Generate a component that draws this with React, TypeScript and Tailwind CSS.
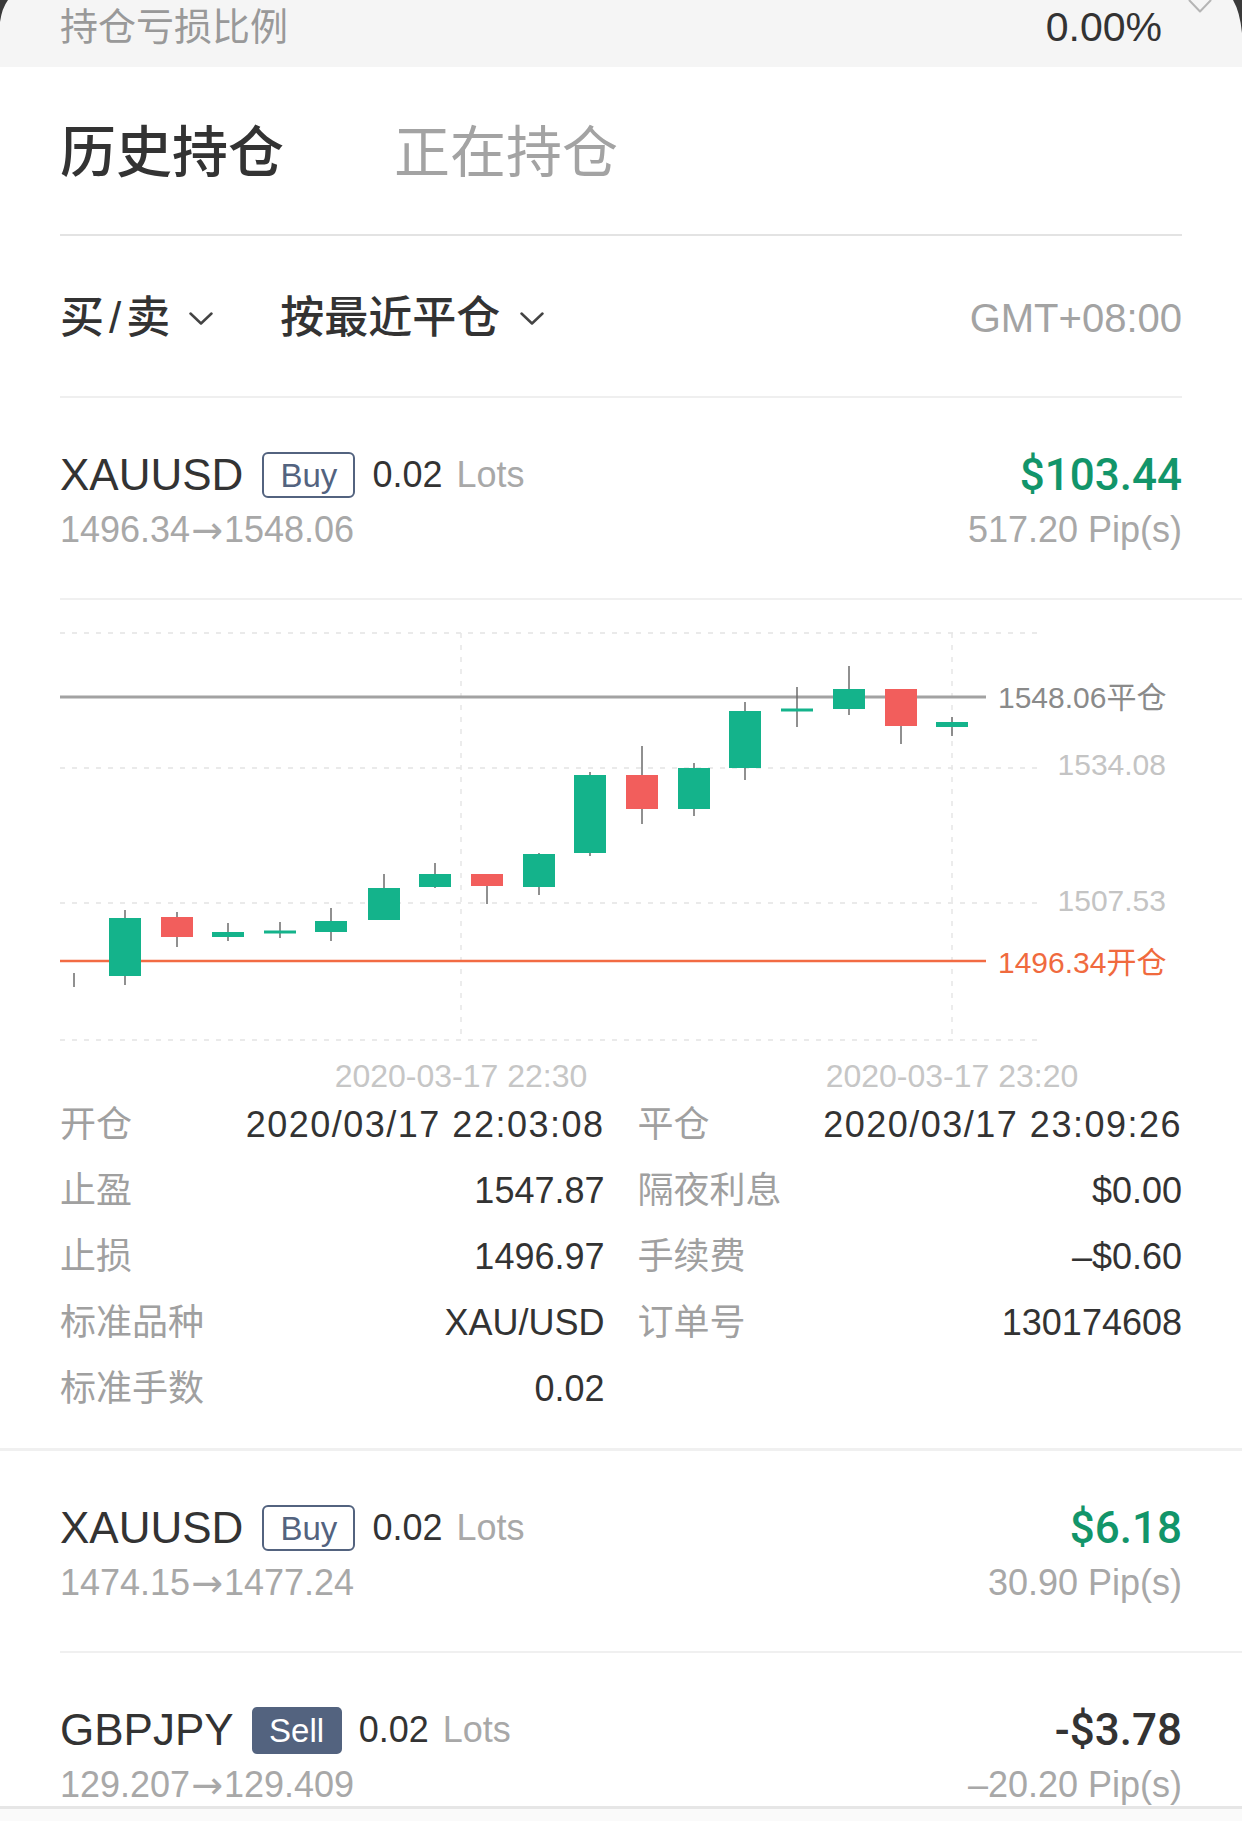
import React from "react";

type Candle = [number, number, number, number, number, "g" | "r" | "n"];

const candles: Candle[] = [
  [74, 0, 0, 973, 987, "n"],
  [125, 918, 976, 910, 985, "g"],
  [177, 917, 937, 912, 947, "r"],
  [228, 932, 937, 923, 941, "g"],
  [280, 932, 932, 922, 938, "g"],
  [331, 921, 932, 908, 941, "g"],
  [384, 888, 920, 874, 920, "g"],
  [435, 874, 887, 863, 888, "g"],
  [487, 874, 886, 874, 904, "r"],
  [539, 854, 887, 853, 895, "g"],
  [590, 775, 853, 772, 856, "g"],
  [642, 775, 809, 746, 824, "r"],
  [694, 768, 809, 763, 816, "g"],
  [745, 711, 768, 702, 780, "g"],
  [797, 710, 710, 687, 727, "g"],
  [849, 689, 709, 666, 715, "g"],
  [901, 689, 726, 689, 744, "r"],
  [952, 722, 727, 717, 736, "g"],
];

const GREEN = "#14b38b";
const RED = "#f25e5c";

function Chevron({ className = "", color = "#444", w = 24, h = 13, sw = 2.5 }: { className?: string; color?: string; w?: number; h?: number; sw?: number }) {
  return (
    <svg width={w} height={h} viewBox={`0 0 ${w} ${h}`} className={className}>
      <path d={`M1.5 1.5 L${w / 2} ${h - 1.5} L${w - 1.5} 1.5`} fill="none" stroke={color} strokeWidth={sw} strokeLinecap="round" strokeLinejoin="round" />
    </svg>
  );
}

function Chart() {
  const font = "'Liberation Sans','Noto Sans CJK SC',sans-serif";
  return (
    <svg width="1242" height="460" viewBox="0 600 1242 460" className="block">
      {[633, 768, 903, 1040].map((y) => (
        <line key={y} x1={60} x2={1038} y1={y} y2={y} stroke="#e3e3e3" strokeWidth={1.5} strokeDasharray="5 7" />
      ))}
      {[461, 952].map((x) => (
        <line key={x} x1={x} x2={x} y1={633} y2={1040} stroke="#e6e6e6" strokeWidth={1.5} strokeDasharray="5 7" />
      ))}
      <line x1={60} x2={986} y1={697} y2={697} stroke="#a2a2a2" strokeWidth={3} />
      <line x1={60} x2={986} y1={961} y2={961} stroke="#f26b43" strokeWidth={2.5} />
      {candles.map(([x, bt, bb, wt, wb, c], i) => {
        const fill = c === "g" ? GREEN : c === "r" ? RED : "#777";
        const h = Math.max(bb - bt, 3);
        const top = bb - bt < 3 ? (bt + bb) / 2 - 1.5 : bt;
        return (
          <g key={i}>
            <line x1={x} x2={x} y1={wt} y2={wb} stroke="#6b6b6b" strokeWidth={1.5} />
            {c !== "n" && <rect x={x - 16} y={top} width={32} height={h} fill={fill} />}
          </g>
        );
      })}
      <text x={998} y={697} dominantBaseline="central" fontSize={30} fill="#8a8a8a" fontFamily={font}>
        1548.06平仓
      </text>
      <text x={1166} y={764} dominantBaseline="central" textAnchor="end" fontSize={30} fill="#c4c4c4" fontFamily={font}>
        1534.08
      </text>
      <text x={1166} y={900} dominantBaseline="central" textAnchor="end" fontSize={30} fill="#c4c4c4" fontFamily={font}>
        1507.53
      </text>
      <text x={998} y={962} dominantBaseline="central" fontSize={30} fill="#f06a3e" fontFamily={font}>
        1496.34开仓
      </text>
    </svg>
  );
}

function Arrow() {
  return <span className="font-['DejaVu_Sans',sans-serif] text-[38px] mx-[1px]">→</span>;
}

function Header({
  symbol,
  side,
  from,
  to,
  profit,
  pips,
  profitClass,
}: {
  symbol: string;
  side: "Buy" | "Sell";
  from: string;
  to: string;
  profit: string;
  pips: string;
  profitClass: string;
}) {
  return (
    <div className="mx-[60px] pt-[49px] pb-[46px]">
      <div className="h-[56px] flex items-center justify-between">
        <div className="flex items-center">
          <span className="text-[44px] leading-none text-[#333]">{symbol}</span>
          {side === "Buy" ? (
            <span className="ml-[19px] w-[93px] h-[46px] border-2 border-[#53637f] rounded-[6px] flex items-center justify-center text-[33px] leading-none text-[#53637f]">
              Buy
            </span>
          ) : (
            <span className="ml-[18px] w-[90px] h-[47px] bg-[#53637f] rounded-[5px] flex items-center justify-center text-[33px] leading-none text-white">
              Sell
            </span>
          )}
          <span className="ml-[17px] text-[36px] leading-none text-[#333]">0.02</span>
          <span className="ml-[14px] text-[36px] leading-none text-[#a8a8a8]">Lots</span>
        </div>
        <span className={`font-['Roboto',sans-serif] font-medium text-[44px] leading-none ${profitClass}`}>{profit}</span>
      </div>
      <div className="mt-[5px] h-[44px] flex items-center justify-between text-[36px] leading-none text-[#a8a8a8]">
        <span className="flex items-center">
          {from}
          <Arrow />
          {to}
        </span>
        <span>{pips}</span>
      </div>
    </div>
  );
}

function DetailCell({ label, value, wide }: { label?: string; value?: string; wide?: boolean }) {
  return (
    <div className="h-[66px] flex items-center justify-between">
      <span className="text-[36px] leading-none text-[#a0a0a0]">{label}</span>
      <span className={`text-[36px] leading-none text-[#333] ${wide ? "tracking-[1.5px]" : ""}`}>{value}</span>
    </div>
  );
}

export default function App() {
  return (
    <div className="relative w-[1242px] h-[1821px] overflow-hidden bg-white text-[#333] font-['Liberation_Sans','Noto_Sans_CJK_SC',sans-serif]">
      {/* top summary bar */}
      <div className="h-[67px] bg-[#f5f5f5] flex items-start pl-[60px] pr-[30px]">
        <div className="h-[54px] flex-1 flex items-center">
          <span className="text-[38px] leading-none text-[#999]">持仓亏损比例</span>
        </div>
        <div className="h-[54px] flex items-center">
          <span className="text-[41px] leading-none text-[#333]">0.00%</span>
        </div>
        <Chevron className="ml-[26px] -mt-[1px]" color="#b5b5b5" w={24} h={14} sw={2} />
      </div>

      {/* tabs */}
      <div className="mx-[60px] h-[169px] pt-[5px] flex items-center gap-[110px] border-b-2 border-[#e3e3e3]">
        <span className="text-[56px] leading-none font-medium text-[#333]">历史持仓</span>
        <span className="text-[56px] leading-none text-[#a3a3a3]">正在持仓</span>
      </div>

      {/* filters */}
      <div className="mx-[60px] h-[162px] pt-[4px] flex items-center border-b-2 border-[#efefef]">
        <span className="text-[44px] leading-none font-medium text-[#333]">
          买<span className="mx-[5px]">/</span>卖
        </span>
        <Chevron className="ml-[19px]" />
        <span className="ml-[67px] text-[44px] leading-none font-medium text-[#333]">按最近平仓</span>
        <Chevron className="ml-[20px]" />
        <span className="ml-auto text-[40px] leading-none text-[#a3a3a3]">GMT+08:00</span>
      </div>

      {/* card 1 */}
      <Header symbol="XAUUSD" side="Buy" from="1496.34" to="1548.06" profit="$103.44" pips="517.20 Pip(s)" profitClass="text-[#12956a]" />
      <div className="ml-[60px] h-[2px] bg-[#f0f0f0]" />
      <Chart />
      <div className="relative h-[32px] text-[32px] leading-none text-[#c6c6c6]">
        <span className="absolute left-[461px] top-0 -translate-x-1/2 whitespace-nowrap">2020-03-17 22:30</span>
        <span className="absolute left-[952px] top-0 -translate-x-1/2 whitespace-nowrap">2020-03-17 23:20</span>
      </div>
      <div className="mx-[60px] grid grid-cols-2 gap-x-[33px] pb-[26px]">
        <DetailCell label="开仓" value="2020/03/17 22:03:08" wide />
        <DetailCell label="平仓" value="2020/03/17 23:09:26" wide />
        <DetailCell label="止盈" value="1547.87" />
        <DetailCell label="隔夜利息" value="$0.00" />
        <DetailCell label="止损" value="1496.97" />
        <DetailCell label="手续费" value="–$0.60" />
        <DetailCell label="标准品种" value="XAU/USD" />
        <DetailCell label="订单号" value="130174608" />
        <DetailCell label="标准手数" value="0.02" />
        <div />
      </div>
      <div className="h-[3px] bg-[#f0f0f0]" />

      {/* card 2 */}
      <Header symbol="XAUUSD" side="Buy" from="1474.15" to="1477.24" profit="$6.18" pips="30.90 Pip(s)" profitClass="text-[#12956a]" />
      <div className="ml-[60px] h-[2px] bg-[#f0f0f0]" />

      {/* card 3 */}
      <Header symbol="GBPJPY" side="Sell" from="129.207" to="129.409" profit="-$3.78" pips="–20.20 Pip(s)" profitClass="text-[#333]" />

      {/* bottom bar overlay */}
      <div className="absolute left-0 right-0 bottom-0 h-[15px] bg-[#fafafa] border-t-[3px] border-[#e6e6e6]" />

      {/* screen corner overlays */}
      <svg className="absolute left-0 top-0" width="10" height="24" viewBox="0 0 10 24">
        <path d="M0 0 L8 0 Q2 8 0 22 Z" fill="#3a3a3a" />
      </svg>
      <svg className="absolute right-0 top-0" width="10" height="36" viewBox="0 0 10 36">
        <path d="M10 0 L1 0 Q8 12 10 33 Z" fill="#3a3a3a" />
      </svg>
    </div>
  );
}
